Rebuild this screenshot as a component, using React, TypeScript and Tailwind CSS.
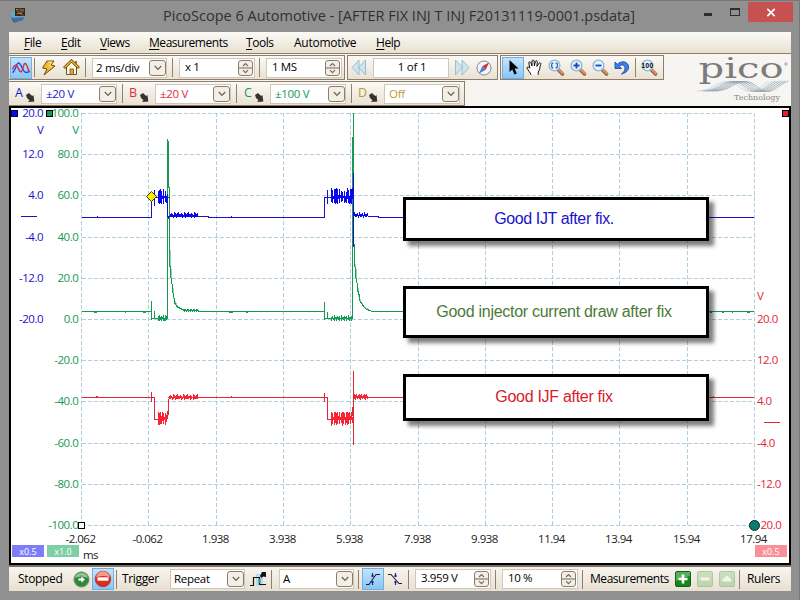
import React from "react";

const BLUE = "#1a10cc";
const RED = "#e22638";
const GREEN = "#149a55";
const UI_FONT = "font-['Open_Sans','Noto_Sans',sans-serif]";

/* ---------- small controls ---------- */

function Sep({ className = "" }: { className?: string }) {
  return <div className={`h-[19px] w-px shrink-0 bg-[#8d8270] ${className}`} />;
}

function DropButton() {
  return (
    <span className="flex h-4 w-[17px] shrink-0 items-center justify-center rounded-[3px] border border-[#8c7d6a] bg-[#f3efe7]">
      <svg width="8" height="6" viewBox="0 0 8 6" fill="none" stroke="#6f5f4c" strokeWidth="1.2">
        <path d="M0.8 1 L4 4.3 L7.2 1" />
      </svg>
    </span>
  );
}

function Combo({ text, className = "", textClass = "text-black" }: { text: string; className?: string; textClass?: string }) {
  return (
    <div className={`flex h-5 shrink-0 items-center justify-between border border-[#cfc8ba] bg-white pr-0 pl-[3px] ${className}`}>
      <span className={`whitespace-nowrap text-[11.5px] leading-none tracking-[-0.3px] ${textClass}`}>{text}</span>
      <DropButton />
    </div>
  );
}

function Spinner({ text, className = "" }: { text: string; className?: string }) {
  return (
    <div className={`flex h-5 w-[76px] shrink-0 items-center justify-between border border-[#cfc8ba] bg-white pr-px pl-[5px] ${className}`}>
      <span className="whitespace-nowrap pb-[2px] text-[11.5px] leading-none tracking-[-0.4px] text-black">{text}</span>
      <span className="flex h-4 w-[15px] flex-col items-center justify-between rounded-[3px] border border-[#8c7d6a] bg-[#f3efe7]">
        <svg width="13" height="14" viewBox="0 0 13 14" fill="none" stroke="#77695a" strokeWidth="1.1">
          <path d="M4 5 L6.5 2.5 L9 5 M0 7 H13 M4 9.2 L6.5 11.7 L9 9.2" />
        </svg>
      </span>
    </div>
  );
}

function ActiveButton({ children, className = "" }: { children: React.ReactNode; className?: string }) {
  return (
    <div className={`flex h-[22px] w-[22px] shrink-0 items-center justify-center border border-[#6fb0e0] bg-linear-to-b from-[#c4e3fb] to-[#86c6f8] ${className}`}>
      {children}
    </div>
  );
}

function Panel({ children, className = "" }: { children: React.ReactNode; className?: string }) {
  return (
    <div className={`flex shrink-0 items-center border-t border-r border-b border-[#8f7d69] bg-linear-to-b from-[#fbf9f5] to-[#e9e2d3] ${className}`}>
      {children}
    </div>
  );
}

/* ---------- icons ---------- */

function AppIcon() {
  return (
    <svg width="18" height="18" viewBox="0 0 18 18">
      <path d="M1 7 L11 4 L15 11 L5 15 Z" fill="#6ea3cf" />
      <path d="M2 12 L15 11 L14 14 L5 17 Z" fill="#426f9f" />
      <path d="M1 7 L3 12 L6 16 L4 15 Z" fill="#2f5583" />
      <rect x="6" y="2" width="10" height="8" fill="#18301f" />
      <path d="M7 5 h3 v-2 h2 v3 h3 M7 8 h2 v-2 h3 v3 h3" stroke="#d8262b" fill="none" />
      <path d="M7 3.5 h2 M12 4 h3 M9 7.5 h4" stroke="#38c552" />
    </svg>
  );
}

function WaveIcon() {
  return (
    <svg width="20" height="20" viewBox="0 0 20 20" fill="none" strokeWidth="1.4">
      <path d="M1.5 14.5 C4.5 14 5 5 7.5 5 C10.5 5 11.5 14.5 15 14.5 C16.5 14.5 17.5 14 18.5 13" stroke="#2149d8" />
      <path d="M1.5 11.5 C3 7.5 4.5 6 6 8 C8 11 8.5 14.5 10.5 13.5 C12.5 12 12 5.5 14 5.5 C16 5.5 16.5 10 18.5 14.5" stroke="#d32c4a" />
    </svg>
  );
}

function BoltIcon() {
  return (
    <svg width="15" height="16" viewBox="0 0 15 16">
      <path d="M6 1 L13 1 L10 5 L14 6 L3 15 L6 9 L1.5 8 Z" fill="#f6b928" stroke="#6b4a12" />
      <path d="M7 2 L11 2 L8 6 L11 7" fill="none" stroke="#ffe99a" />
    </svg>
  );
}

function HomeIcon() {
  return (
    <svg width="17" height="17" viewBox="0 0 17 17">
      <path d="M3.5 8 V15.5 H13.5 V8 L8.5 3 Z" fill="#fffbe8" stroke="#6b4a1c" />
      <path d="M1 9 L8.5 1.8 L16 9" fill="none" stroke="#6e4c19" strokeWidth="2.8" />
      <path d="M1.5 8.5 L8.5 2 L15.5 8.5" fill="none" stroke="#f2b527" strokeWidth="1.4" />
      <rect x="7" y="10" width="3.5" height="5.5" fill="#e2a02c" stroke="#7c5520" strokeWidth=".8" />
      <rect x="12" y="2" width="2" height="3" fill="#9a7540" />
    </svg>
  );
}

function PlugIcon() {
  return (
    <svg width="9" height="10" viewBox="0 0 9 10">
      <path d="M0 2 L3 0 L5 2 L6.5 3 L7.5 2 L8.3 8.6 L2 9 L3.5 7.2 L1 5 Z" fill="#35322f" />
    </svg>
  );
}

function SkipIcon({ flip = false }: { flip?: boolean }) {
  return (
    <svg width="16" height="17" viewBox="0 0 16 17" className={flip ? "-scale-x-100" : ""}>
      <path d="M8 1 V16 L1 8.5 Z M14.5 1 V16 L7.5 8.5 Z" fill="#cfe3ec" stroke="#9fbfce" />
    </svg>
  );
}

function CompassIcon() {
  return (
    <svg width="16" height="16" viewBox="0 0 16 16">
      <circle cx="8" cy="8" r="7" fill="#f3f7fb" stroke="#7d8a99" />
      <path d="M13 2.5 L9.8 9.8 L6.2 6.2 Z" fill="#dd2d35" />
      <path d="M3 13.5 L9.8 9.8 L6.2 6.2 Z" fill="#4f80c8" />
    </svg>
  );
}

function PointerIcon() {
  return (
    <svg width="12" height="17" viewBox="0 0 12 17" className="ml-0.5">
      <path d="M1.5 1 V13 L4.3 10.4 L6.5 15.5 L8.8 14.5 L6.6 9.6 H10.5 Z" fill="#000" />
    </svg>
  );
}

function HandIcon() {
  return (
    <svg width="17" height="17" viewBox="0 0 17 17">
      <path
        d="M5 15.8 C4.5 13.5 2 11.5 1 9 C1 7.6 2.6 7.7 3.8 9.2 L2.8 4 C2.8 2.5 4.4 2.4 4.9 3.8 L6 7 V2 C6.2 .8 7.9 .8 8.1 2 L8.4 6.8 L9.4 2.4 C9.8 1.2 11.3 1.5 11.3 2.8 L10.9 7.4 L13.1 4.2 C14 3.3 15.2 4 14.7 5.3 C13.6 8.3 14 11 12.2 13 V15.8"
        fill="#fff"
        stroke="#111"
      />
    </svg>
  );
}

function LensIcon({ kind }: { kind: "fit" | "in" | "out" | "100" }) {
  return (
    <svg width="17" height="17" viewBox="0 0 17 17">
      <path d="M10 10.5 L14.5 15" stroke="#9b5e43" strokeWidth="3.6" strokeLinecap="round" />
      <path d="M10.5 10.3 L14.8 14.5" stroke="#e0936c" strokeWidth="1.8" strokeLinecap="round" />
      <circle cx="6.5" cy="6.5" r="5.4" fill="#e3f3fd" stroke="#93b7d2" strokeWidth="1.4" />
      {kind === "fit" && <path d="M5.3 3.8 L3.7 4.8 V8.2 L5.3 9.2 M7.7 3.8 L9.3 4.8 V8.2 L7.7 9.2" stroke="#2c61c2" strokeWidth="1.3" fill="none" />}
      {kind === "in" && <path d="M3.5 6.5 H9.5 M6.5 3.5 V9.5" stroke="#1c49bd" strokeWidth="1.8" />}
      {kind === "out" && <path d="M3.5 6.5 H9.5" stroke="#1c49bd" strokeWidth="1.8" />}
      {kind === "100" && (
        <text x="0.6" y="8.7" fontSize="6.5" fontWeight="700" fontFamily="Liberation Sans, sans-serif" textLength="11.5" fill="#000">
          100
        </text>
      )}
    </svg>
  );
}

function UndoIcon() {
  return (
    <svg width="16" height="17" viewBox="0 0 16 17">
      <path
        d="M1 3 V9.5 H7.5 L5.3 7.2 C8 5 11 6 11 9 C11 11.5 9.5 13.5 7.5 15 C12 14.2 14.6 11.5 14.6 8 C14.6 3 8 .8 3.4 5.3 Z"
        fill="#3f7fe4"
        stroke="#1c4fae"
        strokeWidth=".9"
      />
    </svg>
  );
}

function PicoLogo() {
  const waves = [0, 1, 2, 3, 4, 5, 6];
  return (
    <svg width="96" height="52" viewBox="695 52 96 52" className="block overflow-visible">
      {waves.map((i) => (
        <path
          key={i}
          d={`M${697 + i * 3} 91 C${712 + i * 3} 91 ${716 + i * 3} 81.5 ${727 + i * 3} 81.5 C${738 + i * 3} 81.5 ${740 + i * 3} 91.5 ${750 + i * 3} 91.5 C${757 + i * 3} 91 ${762 + i * 2.5} 86 ${769 + i * 3.2} 81`}
          fill="none"
          stroke={i < 2 ? "#bfd8e6" : "#8f9fab"}
          strokeWidth=".75"
        />
      ))}
      <text x="698.5" y="78" fontSize="27" fontFamily="DejaVu Serif, serif" textLength="85" lengthAdjust="spacingAndGlyphs" fill="#7b7b7b">
        pico
      </text>
      <circle cx="786" cy="64" r="1.3" fill="none" stroke="#8a8a8a" strokeWidth=".7" />
      <text x="734" y="99.5" fontSize="8" fontFamily="DejaVu Serif, serif" textLength="46" lengthAdjust="spacingAndGlyphs" fill="#858585">
        Technology
      </text>
    </svg>
  );
}

function GoIcon() {
  return (
    <svg width="17" height="17" viewBox="0 0 17 17">
      <circle cx="8.5" cy="8.5" r="7.6" fill="#2e8b34" stroke="#7f9680" />
      <path d="M2 7 A6.7 6.7 0 0 1 15 7 Q8 4.5 2 7" fill="#8cc88d" />
      <path d="M5 7 H8 V4.6 L12.3 8.5 L8 12.4 V10 H5 Z" fill="#fff" stroke="#1d6424" strokeWidth=".6" />
    </svg>
  );
}

function StopIcon() {
  return (
    <svg width="18" height="18" viewBox="0 0 18 18">
      <circle cx="9" cy="9" r="7.8" fill="#dd2c1e" stroke="#a33a32" strokeWidth=".8" />
      <path d="M2 7.2 A7.1 7.1 0 0 1 16 7.2 Q9 5 2 7.2" fill="#f39a8d" />
      <rect x="3.5" y="7.3" width="11" height="3.4" fill="#fff" />
    </svg>
  );
}

function AdvTriggerIcon() {
  return (
    <svg width="17" height="17" viewBox="0 0 17 17">
      <rect x="6" y="3" width="7" height="12" fill="#b7dcf4" />
      <path d="M0 14.5 H3.5 V6.5 H9.5 V13.5 H16" fill="none" stroke="#111" strokeWidth="1.2" />
      <path d="M9.5 8 V12" stroke="#2a9d5b" strokeWidth="2" />
      <path d="M10 5 L12 1 H16 V6 L13 5.5 L11.5 7 Z" fill="#111" />
    </svg>
  );
}

function EdgeIcon({ falling = false }: { falling?: boolean }) {
  return (
    <svg width="16" height="16" viewBox="0 0 16 16" fill="none">
      <path d={falling ? "M1 3.5 H4 L12 12.5 H15" : "M1 13.5 H4 L11 3.5 H15"} stroke="#222" strokeWidth="1.1" />
      <path d={falling ? "M8.5 2 V6 M8.5 10 V14 M7 5 H10 M7 11 H10" : "M7.5 2 V6 M7.5 10 V14 M6 5 H9 M6 11 H9"} stroke="#1a1ac0" strokeWidth="1.2" />
    </svg>
  );
}

function MeasureIcon({ kind, dim = false }: { kind: "add" | "remove" | "edit"; dim?: boolean }) {
  return (
    <svg width="16" height="16" viewBox="0 0 16 16" opacity={dim ? 0.4 : 1}>
      <rect x=".5" y=".5" width="15" height="15" rx="1.5" fill={dim ? "#7ebf78" : "#18861d"} stroke={dim ? "#4e9350" : "#126016"} />
      <path d="M1 1 H15 V5 Q8 6 1 10 Z" fill="#8ed28b" opacity=".55" />
      {kind === "add" && <path d="M3.5 8 H12.5 M8 3.5 V12.5" stroke="#fff" strokeWidth="2.6" />}
      {kind === "remove" && <path d="M3.5 8 H12.5" stroke="#fff" strokeWidth="3" />}
      {kind === "edit" && <path d="M3.5 10.5 H12.5 V8.5 L8 4.5 L3.5 8.5 Z" fill="#fff" />}
    </svg>
  );
}

/* ---------- window chrome ---------- */

function TitleBar() {
  return (
    <div className="flex h-8 shrink-0 items-start">
      <div className="mt-[5px] ml-[9px] h-[18px] w-[18px] shrink-0">
        <AppIcon />
      </div>
      <div className="mt-[5px] ml-[136px] w-[500px] shrink-0 whitespace-nowrap text-[14.5px] leading-5 text-[#303030]">
        PicoScope 6 Automotive - [AFTER FIX INJ T INJ F20131119-0001.psdata]
      </div>
      <div className="mt-[12px] ml-[41px] h-[3px] w-2 shrink-0 bg-[#2c2c2c]" />
      <div className="mt-[7px] ml-[18px] h-2 w-[10px] shrink-0 border border-t-2 border-[#2c2c2c]" />
      <div className="mt-px ml-2 flex h-5 w-[45px] shrink-0 items-center justify-center bg-[#c75050]">
        <svg width="10" height="9" viewBox="0 0 10 9">
          <path d="M1.3 .8 L8.7 8.2 M8.7 .8 L1.3 8.2" stroke="#fff" strokeWidth="1.7" />
        </svg>
      </div>
    </div>
  );
}

function MenuItem({ label, hot = true, className }: { label: string; hot?: boolean; className: string }) {
  return (
    <span className={`shrink-0 whitespace-nowrap ${className}`}>
      {hot ? <span className="underline underline-offset-2">{label[0]}</span> : label[0]}
      {label.slice(1)}
    </span>
  );
}

function MenuBar() {
  return (
    <div className="flex h-[22px] shrink-0 items-center border-b border-[#8f7d69] bg-linear-to-b from-[#fbfaf6] to-[#e8e1d1] text-[12px] leading-none tracking-[-0.45px] text-black">
      <MenuItem label="File" className="ml-[15px] w-[37px]" />
      <MenuItem label="Edit" className="w-[39px]" />
      <MenuItem label="Views" className="w-[49px]" />
      <MenuItem label="Measurements" className="w-[97px]" />
      <MenuItem label="Tools" className="w-[48px]" />
      <MenuItem label="Automotive" hot={false} className="w-[82px] tracking-[-0.25px]" />
      <MenuItem label="Help" className="w-[40px]" />
    </div>
  );
}

function MainToolbar() {
  return (
    <div className="flex h-[25px]">
      <Panel className="w-[336px]">
        <ActiveButton className="ml-px"><WaveIcon /></ActiveButton>
        <Sep className="ml-[2px]" />
        <div className="ml-[6px] w-[22px]"><BoltIcon /></div>
        <div className="w-[22px]"><HomeIcon /></div>
        <Sep />
        <Combo text="2 ms/div" className="ml-[6px] w-[75px]" />
        <Sep className="ml-[5px]" />
        <Spinner text="x 1" className="ml-[6px]" />
        <Sep className="ml-[4px]" />
        <Spinner text="1 MS" className="ml-[6px]" />
      </Panel>
      <Panel className="ml-[2px] w-[151px] border-l">
        <div className="ml-[3px] w-[22px]"><SkipIcon /></div>
        <div className="flex h-5 w-[76px] items-center justify-center border border-[#cfc8ba] bg-white pb-0.5 pl-0.5 text-[11.5px] leading-none tracking-[-0.2px]">1 of 1</div>
        <div className="ml-[5px] w-[22px]"><SkipIcon flip /></div>
        <CompassIcon />
      </Panel>
      <Panel className="ml-[2px] w-[164px] border-l">
        <ActiveButton className="ml-px"><PointerIcon /></ActiveButton>
        <div className="ml-[2px] w-[22px]"><HandIcon /></div>
        <div className="w-[22px]"><LensIcon kind="fit" /></div>
        <div className="w-[22px]"><LensIcon kind="in" /></div>
        <div className="w-[22px]"><LensIcon kind="out" /></div>
        <div className="w-[21px]"><UndoIcon /></div>
        <Sep />
        <div className="ml-[5px]"><LensIcon kind="100" /></div>
      </Panel>
    </div>
  );
}

function ChannelToolbar() {
  const channels = [
    { name: "A", range: "±20 V", color: "text-[#2018c8]", width: "w-[114px]" },
    { name: "B", range: "±20 V", color: "text-[#e02c40]", width: "w-[115px]" },
    { name: "C", range: "±100 V", color: "text-[#149a55]", width: "w-[114px]" },
    { name: "D", range: "Off", color: "text-[#b89c34]", width: "w-[112px]" },
  ];
  return (
    <Panel className="mt-px h-[25px] w-[456px]">
      {channels.map((c, i) => (
        <div key={c.name} className={`flex h-full shrink-0 items-center ${c.width} ${c.color}`}>
          <span className="ml-[6px] w-[11px] shrink-0 text-[12.5px] leading-none">{c.name}</span>
          <span className="mt-[9px] w-[15px] shrink-0"><PlugIcon /></span>
          <Combo text={c.range} textClass={c.color} className="w-[76px] pl-[4px]" />
          {i < 3 && <Sep className="ml-[5px]" />}
        </div>
      ))}
    </Panel>
  );
}

/* ---------- scope graph ---------- */

const gridX = [81.5, 148.5, 216.5, 283.5, 350.5, 418.5, 485.5, 552.5, 619.5, 687.5, 754.5];
const gridY = [113.5, 154.5, 195.5, 237.5, 278.5, 319.5, 360.5, 401.5, 443.5, 484.5, 525.5];
const timeLabels = ["-2.062", "-0.062", "1.938", "3.938", "5.938", "7.938", "9.938", "11.94", "13.94", "15.94", "17.94"];
const greenLabels = ["100.0", "80.0", "60.0", "40.0", "20.0", "0.0", "-20.0", "-40.0", "-60.0", "-80.0", "-100.0"];
const blueLabels = ["20.0", "12.0", "4.0", "-4.0", "-12.0", "-20.0"];
const redLabels = ["20.0", "12.0", "4.0", "-4.0", "-12.0", "20.0"];

/* Switching ripple: one vertical bar per pixel, heights cycling through a fixed pattern. */
function ripple(x0: number, x1: number, y: number, up: number[], down: number[]) {
  let d = "";
  for (let x = x0, i = 0; x <= x1; x++, i++) {
    d += `M${x + 0.5} ${y - up[i % up.length]}V${y + down[i % down.length]}`;
  }
  return d;
}

const smallUp = [1, 2, 1, 0, 3, 2, 1, 2, 3, 1];
const smallDown = [2, 2, 1, 3, 2, 1, 3, 2, 2];

const bluePath = "M82 217.5H151.5V197.5H168.5M154.5 190V206M168.5 216V219M167.5 194V217M168 216.5H200V216.5H208V217.5H324.5V197.5H353M327.5 190V204M353.5 173V247M354 214.5H358M368 216.5H378V217.5H754";

const blueRipple =
  ripple(158, 166, 197, [6, 7, 8, 6, 1, 8, 1, 6, 1], [6, 7, 6, 7, 2, 7, 1, 5, 6]) +
  ripple(331, 352, 197, [9, 7, 1, 8, 8, 9, 8, 2, 8, 2, 6, 5, 1, 6, 1, 5], [5, 6, 2, 6, 7, 6, 7, 2, 6, 1, 5, 4, 1, 6]) +
  ripple(170, 197, 215, smallUp, smallDown) +
  ripple(354, 367, 215, [3, 1, 1, 2, 0], [1, 2, 2, 1, 3]);

const greenPath =
  "M82 311.5H151.5M151.5 301V320M152 318.5H167M154.5 311V319" +
  ripple(158, 166, 318, [2, 3, 1, 2, 1, 3, 0, 3], [3, 3, 2, 3, 0, 3]) +
  "M167.5 319V139M168.5 141V188M169.5 187V266L170.5 266V275L172.5 287V291L174.5 300V303L177.5 307L181.5 309L186 310.5H197L200 311.5H324.5M324.5 302V320M325 318.5H352M327.5 312V319" +
  ripple(331, 351, 318, [1, 2, 0, 3, 1, 1, 2], [3, 1, 2, 3, 1]) +
  ripple(183, 197, 310, [0, 1, 1], [1, 2, 1, 2]) +
  "M352.5 319V137M353.5 113V244M354.5 244V264L355.5 270V276L357.5 285V290L359.5 296V300L362.5 305L366 309L372 311.5H754";

/* Second pass over the current decay so the steep part reads heavier. */
const greenDecay =
  "M170.5 250V266L171.5 272V282L173.5 290V297L175.5 303L179.5 308L184 310.5M355.5 264L356.5 274V281L358.5 290V296L361.5 303L365 307.5L370 310.5";

const redPath = "M82 397.5H154.5V419.5H167M151.5 392V402M167.5 411V419M168.5 399V415M168 397.5H327.5V419.5H352M324.5 393V402M353.5 371V445M352.5 407V416M353 397.5H754";

const redRipple =
  ripple(158, 166, 419, [7, 6, 7, 3, 7, 6, 2, 6, 4], [6, 6, 5, 5, 2, 5, 1, 6, 3]) +
  ripple(169, 197, 397, smallUp, smallDown) +
  ripple(331, 352, 418, [6, 5, 1, 6, 6, 5, 6, 2, 6, 1, 5, 6], [8, 6, 2, 7, 5, 7, 6, 2, 6, 2, 5]) +
  ripple(354, 367, 397, [3, 2, 3, 1, 2], [2, 3, 1, 2, 1]);

function ScopeGraph() {
  return (
    <svg
      width="778"
      height="455"
      viewBox="11 108 778 455"
      fontFamily="Open Sans, Noto Sans, sans-serif"
      fontSize="11.5"
      className="block overflow-visible bg-white"
    >
      <g stroke="#b0cfdb" strokeDasharray="4 2" shapeRendering="crispEdges" fill="none">
        {gridX.map((x) => <path key={x} d={`M${x} 113V526`} />)}
        {gridY.map((y) => <path key={y} d={`M82 ${y}H755`} />)}
      </g>

      <g shapeRendering="crispEdges" fill="none">
        <path d={greenPath} stroke={GREEN} />
        <path d={greenDecay} stroke={GREEN} strokeOpacity="0.45" />
        <path d={bluePath} stroke={BLUE} />
        <path d={blueRipple} stroke="#0a06f0" />
        <path d={redPath} stroke={RED} />
        <path d={redRipple} stroke="#f82434" />
        <path d="M21 216.5H37" stroke={BLUE} />
        <path d="M764 422.5H780" stroke={RED} />
        <path d="M94 312.5h3M125 312.5h1M143 312.5h3M229 312.5h4M246 312.5h2M710 312.5h2M722 312.5h2M732 312.5h1M747 312.5h3" stroke={GREEN} />
        <path d="M97 216.5h1M231 216.5h1" stroke={BLUE} />
        <path d="M96 396.5h2M231 396.5h1M713 396.5h1" stroke={RED} />
      </g>

      <rect x="11.5" y="110.5" width="6" height="6" fill="#0a0af0" stroke="#000050" />
      <rect x="46.5" y="110.5" width="6" height="6" fill={GREEN} stroke="#000" />
      <rect x="782.5" y="110.5" width="6" height="6" fill="#ee1c2c" stroke="#000" />

      <g fill={BLUE} textAnchor="end" letterSpacing="-0.5">
        {blueLabels.map((t, i) => <text key={t} x="43" y={gridY[i] + 3.6}>{t}</text>)}
        <text x="43.3" y="134">V</text>
      </g>
      <g fill={GREEN} textAnchor="end" letterSpacing="-0.5">
        {greenLabels.map((t, i) => <text key={t} x="78.3" y={gridY[i] + 3.6}>{t}</text>)}
        <text x="78.5" y="134">V</text>
      </g>
      <g fill={RED} letterSpacing="-0.5">
        {redLabels.map((t, i) => <text key={i} x={i === 5 ? 760.5 : 757} y={gridY[i + 5] + 3.6}>{t}</text>)}
        <text x="757" y="300">V</text>
      </g>
      <g fill="#222" textAnchor="middle" letterSpacing="-0.5">
        {timeLabels.map((t, i) => <text key={t} x={gridX[i] - 1} y="543">{t}</text>)}
        <text x="90.5" y="559">ms</text>
      </g>

      <path d="M151.5 191.5L156.5 196.5L151.5 201.5L146.5 196.5Z" fill="#f8f000" stroke="#3c3c00" />
      <rect x="78.5" y="522.5" width="6" height="6" fill="#fff" stroke="#000" />
      <circle cx="754.5" cy="525.5" r="5" fill="#0b7a72" stroke="#0a2c2a" />

      <g fontSize="9" textAnchor="middle" fill="#fff">
        <rect x="12" y="545" width="32" height="12" fill="#7d7df8" />
        <text x="28" y="554.5">x0.5</text>
        <rect x="47" y="545" width="32" height="12" fill="#7fcfa4" />
        <text x="63" y="554.5">x1.0</text>
        <rect x="755" y="545" width="32" height="12" fill="#fa9096" />
        <text x="771" y="554.5">x0.5</text>
      </g>
    </svg>
  );
}

function Callout({ text, className }: { text: string; className: string }) {
  return (
    <div
      className={`absolute left-[392px] flex w-[306px] items-center justify-center border-3 border-black bg-white pr-[4px] pb-px font-['Liberation_Sans',Arial,sans-serif] text-[16px] leading-none shadow-[5px_5px_4px_rgba(0,0,0,0.5)] ${className}`}
    >
      <span className="whitespace-nowrap">{text}</span>
    </div>
  );
}

function StatusBar() {
  return (
    <div className="flex h-6 shrink-0 items-center bg-linear-to-b from-[#f8f5ef] to-[#e8e0d1] text-[12px] leading-none tracking-[-0.35px] text-black">
      <span className="ml-[9px] w-[55px] shrink-0">Stopped</span>
      <div className="w-[19px]"><GoIcon /></div>
      <ActiveButton><StopIcon /></ActiveButton>
      <Sep className="ml-[2px]" />
      <span className="ml-[5px] w-[48px] shrink-0">Trigger</span>
      <Combo text="Repeat" className="w-[75px]" />
      <div className="ml-[5px] w-[21px]"><AdvTriggerIcon /></div>
      <Sep />
      <Combo text="A" className="ml-[7px] w-[75px]" />
      <Sep className="ml-[4px]" />
      <ActiveButton className="ml-[3px]"><EdgeIcon /></ActiveButton>
      <div className="ml-[3px] w-[21px]"><EdgeIcon falling /></div>
      <Sep />
      <Spinner text="3.959 V" className="ml-[6px]" />
      <Sep className="ml-[4px]" />
      <Spinner text="10 %" className="ml-[6px]" />
      <Sep className="ml-[4px]" />
      <span className="ml-[7px] w-[85px] shrink-0 tracking-[-0.45px]">Measurements</span>
      <div className="w-[22px]"><MeasureIcon kind="add" /></div>
      <div className="w-[22px]"><MeasureIcon kind="remove" dim /></div>
      <div className="w-[20px]"><MeasureIcon kind="edit" dim /></div>
      <Sep />
      <span className="ml-[7px] shrink-0">Rulers</span>
    </div>
  );
}

export default function App() {
  return (
    <div className={`flex h-[600px] w-[800px] flex-col overflow-hidden border-t border-r border-[#777777] bg-[#909090] ${UI_FONT}`}>
      <TitleBar />
      <div className="-mt-px ml-[9px] flex w-[782px] flex-col">
        <MenuBar />
        <div className="flex h-[52px] bg-[#f7f5f1] pt-px">
          <div className="w-[686px] shrink-0">
            <MainToolbar />
            <ChannelToolbar />
          </div>
          <div className="-mt-[3px] h-[52px]">
            <PicoLogo />
          </div>
        </div>
        <div className="relative h-[459px] border-2 border-black">
          <ScopeGraph />
          <Callout text="Good IJT after fix." className="top-[89px] h-11 tracking-[-0.38px] text-[#1a12c8]" />
          <Callout text="Good injector current draw after fix" className="top-[178px] h-[52px] tracking-[-0.28px] text-[#4a7a35]" />
          <Callout text="Good IJF after fix" className="top-[266px] h-[47px] tracking-[-0.3px] text-[#d8202c]" />
        </div>
        <div className="h-[2px] bg-[#787068]" />
        <StatusBar />
      </div>
    </div>
  );
}
